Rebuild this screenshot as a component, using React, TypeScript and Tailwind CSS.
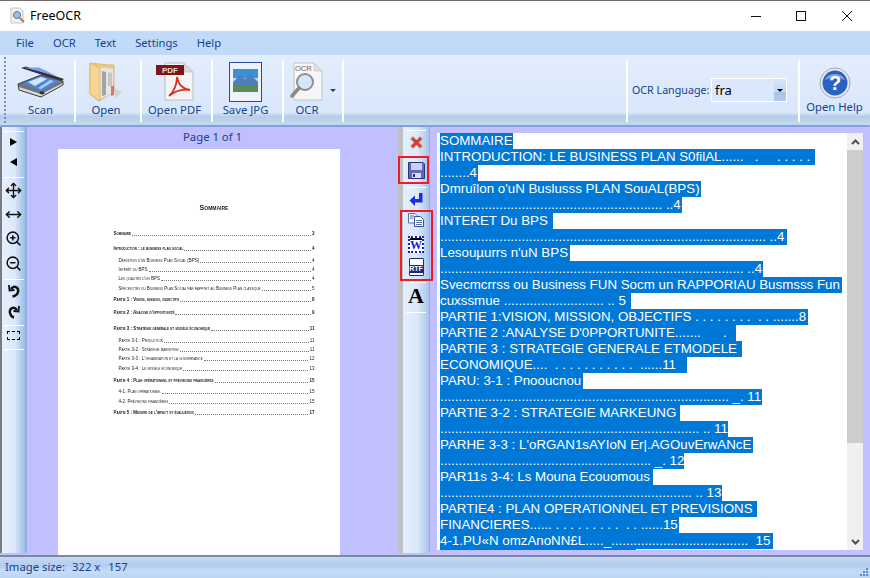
import { Move, MoveHorizontal, ZoomIn, ZoomOut } from "lucide-react";

const menuItems = ["File", "OCR", "Text", "Settings", "Help"];

const dots = (n: number) => ".".repeat(n);

const ocrLines = [
  { text: "SOMMAIRE", w: "w-[73px]" },
  { text: "INTRODUCTION: LE BUSINESS PLAN S0ﬁlAL......   .     . . . . .    .", w: "w-[375px]" },
  { text: dots(8) + "4", w: "w-[38px]" },
  { text: "Dmruîlon o'uN Buslusss PLAN SouAL(BPS)", w: "w-[261px]" },
  { text: dots(60) + " ..4", w: "w-[242px]" },
  { text: "INTERET Du BPS", w: "w-[113px]" },
  { text: dots(88) + " ..4", w: "w-[347px]" },
  { text: "Lesouµurrs n'uN BPS", w: "w-[130px]" },
  { text: dots(82) + " ..4", w: "w-[323px]" },
  { text: "Svecmcrrss ou Business FUN Socm un RAPPORIAU Busmsss Fun", w: "w-[402px]" },
  { text: "cuxssmue " + dots(27) + " .. 5", w: "w-[191px]" },
  { text: "PARTIE 1:VISION, MISSION, OBJECTIFS . . . . . . . .  . . " + dots(7) + "8", w: "w-[368px]" },
  { text: "PARTIE 2 :ANALYSE D'0PPORTUNITE" + dots(7) + "      .", w: "w-[296px]" },
  { text: "PARTIE 3 : STRATEGIE GENERALE ETMODELE", w: "w-[302px]" },
  { text: "ECONOMIQUE" + dots(4) + "  . . . . . . . . . . .  " + dots(6) + "11", w: "w-[247px]" },
  { text: "PARU: 3-1 : Pnooucnou", w: "w-[143px]" },
  { text: dots(78) + " _. 11", w: "w-[322px]" },
  { text: "PARTIE 3-2 : STRATEGIE MARKEUNG", w: "w-[240px]" },
  { text: dots(70) + " .. 11", w: "w-[288px]" },
  { text: "PARHE 3-3 : L'oRGAN1sAYIoN Er|.AGOuvErwANcE", w: "w-[313px]" },
  { text: dots(57) + " _. 12", w: "w-[244px]" },
  { text: "PAR11s 3-4: Ls Mouna Ecouomous", w: "w-[213px]" },
  { text: dots(68) + " .. 13", w: "w-[282px]" },
  { text: "PARTIE4 : PLAN OPERATIONNEL ET PREVISIONS", w: "w-[317px]" },
  { text: "FINANCIERES" + dots(6) + " . . . . . . . . .  . . " + dots(6) + "15", w: "w-[239px]" },
  { text: "4-1.PU«N omzAnoNN£L" + dots(5) + "_" + dots(37) + "  15", w: "w-[333px]" },
  { text: "", w: "w-[196px]" },
];

const tocRows = [
  { label: "Sommaire", page: "3", cls: "mt-[19px] font-bold" },
  { label: "Introduction : le business plan social", page: "4", cls: "mt-[10px] font-bold" },
  { label: "Définition d'un Business Plan Social (BPS)", page: "4", cls: "mt-[7px] pl-[5px]" },
  { label: "Intérêt du BPS", page: "4", cls: "mt-[4px] pl-[5px]" },
  { label: "Les qualités d'un BPS", page: "4", cls: "mt-[4px] pl-[5px]" },
  { label: "Spécificités du Business Plan Social par rapport au Business Plan classique", page: "5", cls: "mt-[5px] pl-[5px]" },
  { label: "Partie 1 : Vision, mission, objectifs", page: "8", cls: "mt-[6px] font-bold" },
  { label: "Partie 2 : Analyse d'opportunité", page: "9", cls: "mt-[8px] font-bold" },
  { label: "Partie 3 : Stratégie générale et modèle économique", page: "11", cls: "mt-[11px] font-bold" },
  { label: "Partie 3-1 : Production", page: "11", cls: "mt-[7px] pl-[5px]" },
  { label: "Partie 3-2 : Stratégie marketing", page: "11", cls: "mt-[4px] pl-[5px]" },
  { label: "Partie 3-3 : L'organisation et la gouvernance", page: "12", cls: "mt-[4px] pl-[5px]" },
  { label: "Partie 3-4 : Le modèle économique", page: "13", cls: "mt-[5px] pl-[5px]" },
  { label: "Partie 4 : Plan opérationnel et prévisions financières", page: "15", cls: "mt-[7px] font-bold" },
  { label: "4-1. Plan opérationnel", page: "15", cls: "mt-[6px] pl-[5px]" },
  { label: "4-2. Prévisions financières", page: "15", cls: "mt-[5px] pl-[5px]" },
  { label: "Partie 5 : Mesure de l'impact et évaluation", page: "17", cls: "mt-[6px] font-bold" },
];

function ScannerIcon() {
  return (
    <svg width="48" height="32" viewBox="0 0 48 32" className="mb-[4px]">
      <path d="M4 2 L9 0.5 L47 13 L44 15 Z" fill="#2e3140" />
      <path d="M7 1.5 L22 1.5 L40 10 Z" fill="#7f9bea" />
      <path d="M1 18 L24 9 L46 15 L46 19 L24 31 L2 24 Z" fill="#70737a" />
      <path d="M5 17 L24 10 L43 15.5 L25 25 Z" fill="#4a85d6" />
      <path d="M11 16 L24 11 L30 13 L18 20 Z" fill="#cfe5fb" />
      <path d="M33 14 L37 15 L24 23 L21 22 Z" fill="#a9cdf3" />
      <path d="M2 21 L24 28 L46 17 L46 19.5 L24 31 L2 24.5 Z" fill="#d6d8dc" />
      <ellipse cx="25" cy="27" rx="2.6" ry="1.4" fill="#2f2f2f" />
      <path d="M1 18 L24 9 L46 15 L46 19 L24 31 L2 24 Z" fill="none" stroke="#3a3d46" strokeWidth="1" />
    </svg>
  );
}

function FolderIcon() {
  return (
    <svg width="34" height="40" viewBox="0 0 34 40">
      <path d="M1 1 L20 3 L25 3 L25 30 L10 39 L1 32 Z" fill="#f0c877" stroke="#d5b26e" strokeWidth="0.8" />
      <path d="M9 5 L24 7 L24 31 L11 37 Z" fill="#e6e6e6" />
      <path d="M13 9 L17 10 L17 33 L13 34 Z" fill="#a4a4a4" />
      <path d="M19 10 L23 11 L23 24 L19 24 Z" fill="#c6c6c6" />
      <path d="M1 1 L11 6 L11 39 L1 32 Z" fill="#f6d692" stroke="#d5b26e" strokeWidth="0.8" />
      <path d="M22 24 L25 24 L25 33 L22 34 Z" fill="#d8736a" />
      <path d="M25 26 L33 30 L26 36 Z" fill="#c9c9c9" opacity="0.7" />
    </svg>
  );
}

function PdfIcon() {
  return (
    <svg width="38" height="40" viewBox="0 0 38 40">
      <path d="M9 1 L28 1 L37 10 L37 38 L9 38 Z" fill="#f4f4f4" stroke="#bdbdbd" />
      <path d="M28 1 L28 10 L37 10 Z" fill="#d8d8d8" stroke="#bdbdbd" strokeWidth="0.6" />
      <rect x="0" y="3" width="28" height="10" fill="#7d1616" />
      <text x="14" y="11" textAnchor="middle" fontSize="8" fontWeight="700" fill="#f3dada" fontFamily="Liberation Sans, sans-serif">PDF</text>
      <path d="M13 34 C18 30 21 22 21 15 C22 22 27 27 34 28 C27 27 19 29 13 34 Z" fill="none" stroke="#d8301f" strokeWidth="1.8" />
    </svg>
  );
}

function PictureIcon() {
  return (
    <svg width="33" height="40" viewBox="0 0 33 40">
      <rect x="0.5" y="0.5" width="32" height="39" fill="#eef3fb" stroke="#2b4a9a" />
      <rect x="4" y="7" width="25" height="9" fill="#3c8fd6" />
      <rect x="4" y="16" width="25" height="8" fill="#bcd8f0" />
      <path d="M4 20 L11 13 L16 17 L21 12 L29 20 L29 24 L4 24 Z" fill="#4f7fb8" />
      <rect x="4" y="23" width="25" height="7" fill="#5d8a52" />
    </svg>
  );
}

function OcrIcon() {
  return (
    <svg width="34" height="40" viewBox="0 0 34 40">
      <path d="M4 1 L24 1 L32 9 L32 38 L4 38 Z" fill="#f6f6f6" stroke="#c4c4c4" />
      <path d="M24 1 L24 9 L32 9 Z" fill="#dedede" stroke="#c4c4c4" strokeWidth="0.6" />
      <text x="5" y="9" fontSize="7.5" fill="#666" fontFamily="Liberation Sans, sans-serif">OCR</text>
      <circle cx="15" cy="20" r="8" fill="#d5e6f7" stroke="#8b8f94" strokeWidth="2" />
      <path d="M9 26 L2 34" stroke="#8a8a80" strokeWidth="3.5" strokeLinecap="round" />
    </svg>
  );
}

function HelpIcon() {
  return (
    <svg width="32" height="32" viewBox="0 0 32 32">
      <circle cx="16" cy="16" r="15" fill="#e8eaee" stroke="#a5a8b0" />
      <circle cx="16" cy="16" r="12.5" fill="#2a62c4" />
      <path d="M6 13 C9 5 23 5 26 13 C20 10 12 10 6 13 Z" fill="#7ea6e6" />
      <text x="16" y="23" textAnchor="middle" fontSize="20" fontWeight="700" fill="#fff" fontFamily="Liberation Sans, sans-serif">?</text>
    </svg>
  );
}

function AppIcon() {
  return (
    <svg width="16" height="18" viewBox="0 0 16 18">
      <path d="M1 1 L10 1 L13 4 L13 16 L1 16 Z" fill="#f2f2f2" stroke="#c6c6c6" />
      <circle cx="7" cy="8" r="3.5" fill="#9cc0e6" stroke="#5d7896" />
      <path d="M10 11 L14 15" stroke="#d0743a" strokeWidth="2" />
    </svg>
  );
}

function ToolButton({ label, width, children }: { label: string; width: string; children: React.ReactNode }) {
  return (
    <div className={`flex h-[62px] flex-col items-center border-r-2 border-white ${width}`}>
      <div className="flex h-[42px] items-end justify-center">{children}</div>
      <span className="text-[11.3px] leading-[16px] text-[#15428b]">{label}</span>
    </div>
  );
}

function Separator({ className = "" }: { className?: string }) {
  return <div className={`h-[1px] w-[20px] shrink-0 bg-white ${className}`} />;
}

function SideTool({ height, children }: { height: string; children: React.ReactNode }) {
  return <div className={`flex w-full shrink-0 items-center justify-center ${height}`}>{children}</div>;
}

export default function App() {
  return (
    <div className="flex h-[578px] w-[870px] flex-col overflow-hidden border-t border-[#6e6e6e] bg-[#c0bfff] font-['Noto_Sans',sans-serif]">
      {/* title bar */}
      <div className="flex h-[30px] shrink-0 items-center bg-white pl-[10px]">
        <AppIcon />
        <span className="ml-[4px] mt-[1px] text-[12.5px] text-black">FreeOCR</span>
        <div className="ml-auto flex items-center">
          <svg width="102" height="16" viewBox="0 0 102 16" className="mr-[17px]" fill="none" stroke="#111" strokeWidth="1">
            <path d="M0 8.5 H10" />
            <rect x="45.5" y="3.5" width="9" height="9" />
            <path d="M91 3 L101 13 M101 3 L91 13" />
          </svg>
        </div>
      </div>

      {/* menu */}
      <div className="flex h-[24px] shrink-0 items-center gap-[19px] bg-[#c1daf9] pl-[16px] text-[11.2px] text-[#15428b]">
        {menuItems.map((item) => (
          <span key={item}>{item}</span>
        ))}
      </div>

      {/* toolbar */}
      <div className="flex h-[72px] shrink-0 items-start rounded-b-[2px] border-b-2 border-[#7da2d8] bg-[linear-gradient(180deg,#e3eefd_0%,#d9e7fb_82%,#b7cce8_88%,#c6d9f1_100%)] pt-[5px]">
        <div className="ml-[4px] mt-[-3px] h-[66px] w-[2px] border-l-2 border-dotted border-[#6f93c8]" />
        <div className="w-[1px]" />
        <ToolButton label="Scan" width="w-[69px]">
          <ScannerIcon />
        </ToolButton>
        <ToolButton label="Open" width="w-[66px] pr-[4px]">
          <FolderIcon />
        </ToolButton>
        <ToolButton label="Open PDF" width="w-[71px] pr-[4px]">
          <PdfIcon />
        </ToolButton>
        <ToolButton label="Save JPG" width="w-[71px] pr-[4px]">
          <PictureIcon />
        </ToolButton>
        <div className="flex h-[62px] w-[60px] border-r-2 border-white">
          <div className="flex w-[46px] flex-col items-center">
            <div className="flex h-[42px] items-end">
              <OcrIcon />
            </div>
            <span className="text-[11.3px] leading-[16px] text-[#15428b]">OCR</span>
          </div>
          <div className="mt-[29px] h-0 w-0 border-x-[3px] border-t-[3px] border-x-transparent border-t-[#15428b]" />
        </div>
        <div className="h-[62px] w-[284px] border-r-2 border-white" />
        <div className="flex h-[62px] w-[172px] items-center border-r-2 border-white pb-[2px]">
          <span className="ml-[4px] whitespace-nowrap text-[10.7px] text-[#15428b]">OCR Language:</span>
          <div className="ml-auto mr-[11px] flex h-[24px] w-[76px] items-stretch border border-white bg-[#dbe8fb]">
            <span className="flex-1 pl-[3px] text-[13px] leading-[22px] text-black">fra</span>
            <div className="flex w-[12px] items-center justify-center bg-[linear-gradient(180deg,#d6e5f9_0%,#c3d8f4_60%,#a9c2e8_61%,#b3cbec_100%)]">
              <div className="h-0 w-0 border-x-[3px] border-t-[3px] border-x-transparent border-t-black" />
            </div>
          </div>
        </div>
        <div className="flex w-[69px] flex-col items-center">
          <div className="mt-[7px] flex h-[32px] items-center">
            <HelpIcon />
          </div>
          <span className="whitespace-nowrap text-[11.3px] leading-[16px] text-[#15428b]">Open Help</span>
        </div>
      </div>

      {/* main */}
      <div className="flex min-h-0 flex-1 bg-[#c0bfff]">
        {/* view tools */}
        <div className="flex h-[426px] w-[27px] shrink-0 flex-col items-center rounded-br-[2px] border-l-2 border-r-2 border-l-[#7b7b80] border-r-[#8fb0e0] bg-[linear-gradient(90deg,#e6f0fe_0%,#dce9fb_55%,#9dbde6_100%)] pt-[4px]">
          <Separator />
          <SideTool height="h-[20px]">
            <div className="h-0 w-0 border-y-[4px] border-l-[7px] border-y-transparent border-l-black" />
          </SideTool>
          <SideTool height="h-[20px]">
            <div className="h-0 w-0 border-y-[4px] border-r-[7px] border-y-transparent border-r-black" />
          </SideTool>
          <Separator className="mt-[5px]" />
          <SideTool height="h-[24px]">
            <Move size={17} strokeWidth={2} color="#111" />
          </SideTool>
          <SideTool height="h-[24px]">
            <MoveHorizontal size={17} strokeWidth={2} color="#111" />
          </SideTool>
          <SideTool height="h-[24px]">
            <ZoomIn size={17} strokeWidth={2.2} color="#111" />
          </SideTool>
          <SideTool height="h-[26px]">
            <ZoomOut size={17} strokeWidth={2.2} color="#111" />
          </SideTool>
          <Separator className="mt-[3px]" />
          <SideTool height="h-[21px]">
            <svg width="12" height="14" viewBox="0 0 12 14" fill="none" stroke="#111" strokeWidth="2.4">
              <path d="M3 5 C6 1 11 3 10 8 C9.5 10.5 7 12 4.5 12.5" />
              <path d="M1 1 L1.5 6.5 L6.5 6" strokeWidth="1.8" />
            </svg>
          </SideTool>
          <SideTool height="h-[21px]">
            <svg width="12" height="14" viewBox="0 0 12 14" fill="none" stroke="#111" strokeWidth="2.4">
              <path d="M9 5 C6 1 1 3 2 8 C2.5 10.5 4 12 6 12.5" />
              <path d="M11 1 L10.5 6.5 L5.5 6" strokeWidth="1.8" />
            </svg>
          </SideTool>
          <Separator className="mt-[3px]" />
          <SideTool height="h-[19px]">
            <div className="h-[9px] w-[13px] border border-dashed border-black" />
          </SideTool>
          <Separator className="mt-[4px]" />
        </div>

        {/* page preview */}
        <div className="flex w-[371px] shrink-0 flex-col items-center">
          <div className="mt-[3px] h-[19px] text-[11.3px] leading-[14px] text-[#15428b]">Page 1 of 1</div>
          <div className="mr-[28px] flex h-[406px] w-[282px] flex-col bg-white pl-[56px] pr-[25px] font-['Liberation_Sans',sans-serif] text-[#222] blur-[0.35px]">
            <div className="mt-[55px] text-center text-[7px] font-bold leading-[8px] [font-variant:small-caps]">Sommaire</div>
            {tocRows.map((row) => (
              <div key={row.label} className={`flex items-end whitespace-nowrap text-[4.5px] leading-[5px] [font-variant:small-caps] ${row.cls}`}>
                <span>{row.label}</span>
                <span className="mx-[1px] min-w-0 flex-1 border-b border-dotted border-[#777]" />
                <span>{row.page}</span>
              </div>
            ))}
          </div>
        </div>

        {/* splitter + text tools */}
        <div className="relative flex w-[39px] shrink-0">
          <div className="h-[426px] w-[5px] bg-[#bfc0c4]" />
          <div className="flex h-[426px] w-[27px] flex-col items-center rounded-br-[2px] border-r border-[#8fb0e0] bg-[linear-gradient(90deg,#e3eefd_0%,#dce9fb_55%,#a9c5ea_100%)] pt-[3px]">
            <Separator />
            <SideTool height="h-[22px]">
              <svg width="15" height="15" viewBox="0 0 15 15">
                <path d="M1.5 4 L4 1.5 L7.5 5 L11 1.5 L13.5 4 L10 7.5 L13.5 11 L11 13.5 L7.5 10 L4 13.5 L1.5 11 L5 7.5 Z" fill="#d63a30" stroke="#c9b5a8" strokeWidth="1" />
              </svg>
            </SideTool>
            <SideTool height="h-[34px]">
              <svg width="17" height="17" viewBox="0 0 17 17">
                <path d="M0.5 0.5 H15 L16.5 2 V16.5 H0.5 Z" fill="#5a6cc0" stroke="#2c3578" />
                <rect x="3" y="1" width="11" height="7" fill="#c8d0ee" />
                <rect x="4" y="11" width="9" height="5" fill="#dcdce2" />
                <rect x="5" y="12" width="2" height="3" fill="#333" />
              </svg>
            </SideTool>
            <Separator />
            <SideTool height="h-[22px]">
              <svg width="15" height="15" viewBox="0 0 15 15">
                <path d="M10 1 H13.5 V10.5 H6 V14 L0.5 8.5 L6 3.5 V7 H10 Z" fill="#1a2fe0" />
              </svg>
            </SideTool>
            <Separator />
            <SideTool height="h-[18px]">
              <svg width="16" height="14" viewBox="0 0 16 14">
                <path d="M0.5 0.5 H7 L9 2.5 V10 H0.5 Z" fill="#eef2fa" stroke="#5a72a8" />
                <path d="M6.5 3.5 H12.5 L15.5 6.5 V13.5 H6.5 Z" fill="#fff" stroke="#35508f" />
                <path d="M8 7.5 H14 M8 9.5 H14 M8 11.5 H14 M2 3 H6 M2 5 H5" stroke="#35508f" strokeWidth="0.8" />
              </svg>
            </SideTool>
            <SideTool height="h-[30px]">
              <div className="flex h-[17px] w-[16px] flex-col border-2 border-dotted border-[#1420d8] bg-white">
                <div className="h-[2px] shrink-0 bg-black" />
                <div className="text-center font-['Liberation_Serif',serif] text-[12px] font-bold leading-[10px] text-[#1420d8]">W</div>
              </div>
            </SideTool>
            <SideTool height="h-[16px]">
              <div className="relative h-[18px] w-[15px] rounded-[1px] border border-[#1a2a80] bg-white">
                <div className="absolute bottom-[2px] left-[-1px] right-[-1px] bg-[#1a2a80] text-center font-['Liberation_Sans',sans-serif] text-[7px] font-bold leading-[8px] text-white">
                  RTF
                </div>
              </div>
            </SideTool>
            <Separator className="mt-[7px]" />
            <SideTool height="h-[26px]">
              <span className="font-['Liberation_Serif',serif] text-[22px] font-bold leading-none text-black">A</span>
            </SideTool>
            <Separator className="mt-[3px]" />
          </div>
          {/* red marks drawn over the toolbar */}
          <div className="absolute left-0 top-[29px] h-[28px] w-[31px] border-2 border-[#ee1c25]" />
          <div className="absolute left-[2px] top-[83px] h-[71px] w-[33px] border-2 border-[#ee1c25]" />
        </div>

        {/* recognised text */}
        <div className="mt-[6px] flex h-[417px] w-[426px] shrink-0 bg-white">
          <div className="min-w-0 flex-1 overflow-hidden pl-[3px] font-['Liberation_Sans',sans-serif] text-[13.33px] leading-[16px] text-white">
            {ocrLines.map((line, i) => (
              <div key={i} className={`h-[16px] whitespace-pre bg-[#0078d7] ${line.w}`}>
                {line.text}
              </div>
            ))}
          </div>
          <div className="flex w-[16px] shrink-0 flex-col items-center bg-[#f0f0f0]">
            <div className="flex h-[17px] items-center justify-center">
              <svg width="9" height="6" viewBox="0 0 9 6" fill="none" stroke="#505050" strokeWidth="2">
                <path d="M1 5 L4.5 1.5 L8 5" />
              </svg>
            </div>
            <div className="h-[293px] w-full bg-[#cdcdcd]" />
            <div className="mt-auto flex h-[17px] items-center justify-center">
              <svg width="9" height="6" viewBox="0 0 9 6" fill="none" stroke="#505050" strokeWidth="2">
                <path d="M1 1 L4.5 4.5 L8 1" />
              </svg>
            </div>
          </div>
        </div>
      </div>

      {/* status bar */}
      <div className="flex h-[23px] shrink-0 items-center border-t-2 border-[#7c8aa0] bg-[linear-gradient(180deg,#c4d9f5_0%,#b3cdf0_40%,#c9dcf6_70%,#bcd3f2_100%)] pl-[5px] text-[11.3px] text-[#15428b]">
        <span>Image size:</span>
        <span className="ml-[7px]">322 x</span>
        <span className="ml-[8px]">157</span>
        <div className="ml-auto mr-[2px] mt-[8px] grid grid-cols-3 gap-[1px]">
          <span className="col-start-3 h-[2px] w-[2px] bg-[#5c86c8]" />
          <span className="col-start-2 h-[2px] w-[2px] bg-[#5c86c8]" />
          <span className="h-[2px] w-[2px] bg-[#5c86c8]" />
          <span className="h-[2px] w-[2px] bg-[#5c86c8]" />
          <span className="h-[2px] w-[2px] bg-[#5c86c8]" />
          <span className="h-[2px] w-[2px] bg-[#5c86c8]" />
        </div>
      </div>
    </div>
  );
}
